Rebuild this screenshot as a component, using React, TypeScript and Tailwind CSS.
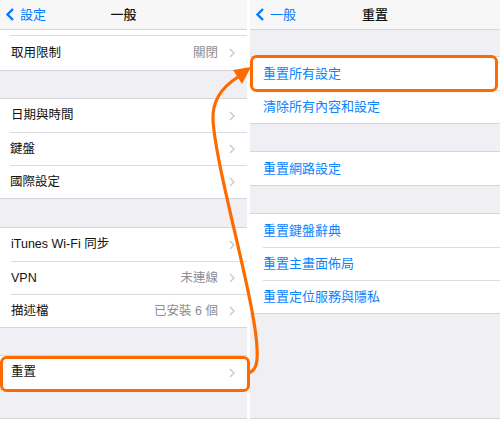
import React from "react";

const font = { fontFamily: '"Liberation Sans", "Noto Sans CJK TC", sans-serif' };

function Chevron() {
  return (
    <svg width="6" height="10" viewBox="0 0 6 10" className="shrink-0">
      <path d="M1 1l4 4-4 4" fill="none" stroke="#c7c7cc" strokeWidth="1.3" />
    </svg>
  );
}

function BackChevron() {
  return (
    <svg width="10" height="13" viewBox="0 0 10 13" className="shrink-0">
      <path d="M8 1L2.5 6.5 8 12" fill="none" stroke="#007aff" strokeWidth="2.4" />
    </svg>
  );
}

function NavBar({ back, title }: { back: string; title: string }) {
  return (
    <div className="relative h-[30px] shrink-0 bg-[#f7f7f8] border-b border-[#d6d6da] flex items-start pt-[5px]">
      <div className="flex items-center gap-[5px] pl-[5px] text-[13px] text-[#007aff]">
        <BackChevron />
        <span>{back}</span>
      </div>
      <div className="absolute inset-x-0 top-[5px] text-center text-[13px] font-medium text-[#111]">
        {title}
      </div>
    </div>
  );
}

type Row = { label: string; value?: string; chevron?: boolean };

function Group({ rows, inset, blue }: { rows: Row[]; inset: string; blue?: boolean }) {
  return (
    <div className="bg-white border-y border-[#d6d6da]">
      {rows.map((r, i) => (
        <div key={r.label} className={i > 0 ? inset : ""}>
          <div
            className={
              "h-[33px] flex items-center " + (i > 0 ? "border-t border-[#dcdce0]" : "")
            }
          >
            <span className={blue ? "text-[13px] text-[#0a84ff]" : "text-[12.5px] text-[#111]"}>
              {r.label}
            </span>
            <span className="flex-1" />
            {r.value && <span className="text-[12.5px] text-[#8e8e93] mr-[11px]">{r.value}</span>}
            {r.chevron && <span className="mr-[12px]"><Chevron /></span>}
          </div>
        </div>
      ))}
    </div>
  );
}

function Gap({ h }: { h: string }) {
  return <div className={h} />;
}

export default function App() {
  return (
    <div className="relative w-[500px] h-[421px] bg-white overflow-hidden" style={font}>
      <div className="flex h-[419px]">
        {/* Left: 一般 */}
        <div className="w-[247px] bg-[#efeff4] flex flex-col border-b border-[#d6d6da]">
          <NavBar back="設定" title="一般" />
          <div className="bg-white pl-[10px] h-[6px]">
            <div className="h-full border-b border-[#dcdce0]" />
          </div>
          <div className="bg-white border-b border-[#d6d6da] pl-[11px]">
            <div className="h-[34px] flex items-center">
              <span className="text-[12.5px] text-[#111]">取用限制</span>
              <span className="flex-1" />
              <span className="text-[12.5px] text-[#8e8e93] mr-[11px]">關閉</span>
              <span className="mr-[12px]"><Chevron /></span>
            </div>
          </div>
          <Gap h="h-[27px]" />
          <div className="pl-0">
            <div className="[&>div]:pl-[11px]">
              <Group
                inset="-ml-[1px]"
                rows={[
                  { label: "日期與時間", chevron: true },
                  { label: "鍵盤", chevron: true },
                  { label: "國際設定", chevron: true },
                ]}
              />
            </div>
          </div>
          <Gap h="h-[28px]" />
          <div className="[&>div]:pl-[11px]">
            <Group
              inset=""
              rows={[
                { label: "iTunes Wi-Fi 同步", chevron: true },
                { label: "VPN", value: "未連線", chevron: true },
                { label: "描述檔", value: "已安裝 6 個", chevron: true },
              ]}
            />
          </div>
          <Gap h="h-[27px]" />
          <div className="[&>div]:pl-[11px]">
            <Group inset="" rows={[{ label: "重置", chevron: true }]} />
          </div>
        </div>

        <div className="w-[3px] bg-white" />

        {/* Right: 重置 */}
        <div className="flex-1 bg-[#efeff4] flex flex-col border-b border-[#d6d6da]">
          <NavBar back="一般" title="重置" />
          <Gap h="h-[26px]" />
          <div className="[&>div]:pl-[13px]">
            <Group blue inset="" rows={[{ label: "重置所有設定" }, { label: "清除所有內容和設定" }]} />
          </div>
          <Gap h="h-[27px]" />
          <div className="[&>div]:pl-[13px]">
            <Group blue inset="" rows={[{ label: "重置網路設定" }]} />
          </div>
          <Gap h="h-[27px]" />
          <div className="[&>div]:pl-[13px]">
            <Group
              blue
              inset=""
              rows={[
                { label: "重置鍵盤辭典" },
                { label: "重置主畫面佈局" },
                { label: "重置定位服務與隱私" },
              ]}
            />
          </div>
        </div>
      </div>

      {/* annotation overlay */}
      <svg
        className="absolute inset-0 pointer-events-none"
        width="500"
        height="421"
        viewBox="0 0 500 421"
      >
        <rect x="1.5" y="357.5" width="247" height="33" rx="5" fill="none" stroke="#ff6a00" strokeWidth="3" />
        <rect x="251.5" y="56.5" width="245" height="34" rx="5" fill="none" stroke="#ff6a00" strokeWidth="3" />
        <path
          d="M249 373 C256 370 258 363 257 348 C255 300 216 170 213 120 C212 100 222 87 238 77"
          fill="none"
          stroke="#ff6a00"
          strokeWidth="3.2"
          strokeLinecap="round"
        />
        <polygon points="251,67 233,70 242,84" fill="#ff6a00" />
      </svg>
    </div>
  );
}
